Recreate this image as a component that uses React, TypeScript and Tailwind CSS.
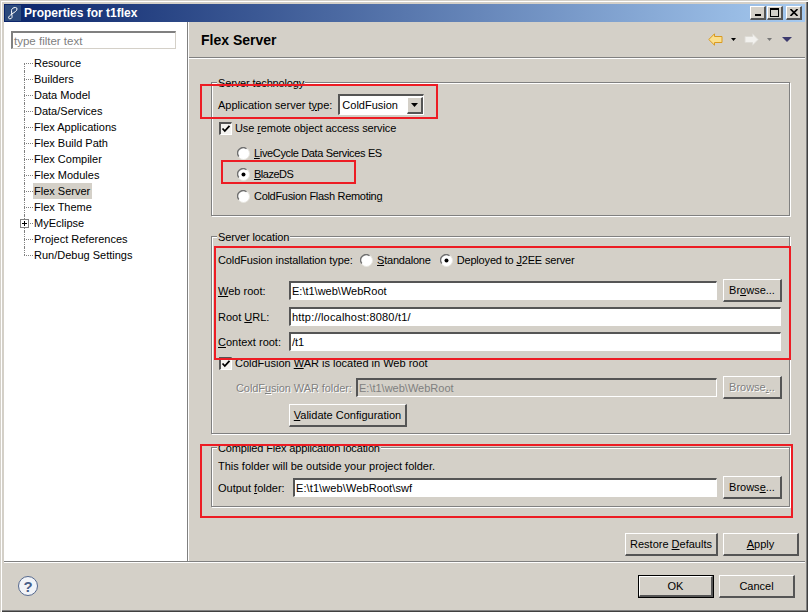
import React from 'react';

const treeItems = [
  'Resource', 'Builders', 'Data Model', 'Data/Services', 'Flex Applications', 'Flex Build Path',
  'Flex Compiler', 'Flex Modules', 'Flex Server', 'Flex Theme', 'MyEclipse', 'Project References',
  'Run/Debug Settings',
];

const raised = 'border-t border-l border-t-white border-l-white border-r-2 border-b-2 border-r-[#555] border-b-[#555]';
const sunken = 'border-t-2 border-l-2 border-t-[#555] border-l-[#555] border-r border-b border-r-white border-b-white';

const Btn: React.FC<{ className?: string; disabled?: boolean; children: React.ReactNode }> = ({ className = '', disabled, children }) => (
  <div className={`flex items-center justify-center shrink-0 bg-[#d4d0c8] ${raised} ${disabled ? 'text-[#808080] [text-shadow:1px_1px_0_#fff]' : 'text-black'} ${className}`}>
    <span>{children}</span>
  </div>
);

const Field: React.FC<{ value?: string; disabled?: boolean; className?: string }> = ({ value, disabled, className = '' }) => (
  <div className={`flex items-center pl-px whitespace-nowrap ${sunken} ${disabled ? 'bg-[#d4d0c8] text-[#808080]' : 'bg-white text-black'} ${className}`}>
    {value}
  </div>
);

const Radio: React.FC<{ on?: boolean }> = ({ on }) => (
  <svg width="13" height="13" viewBox="0 0 13 13" className="shrink-0">
    <circle cx="6.5" cy="6.5" r="6" fill="#fff" stroke="#e8e6e0" />
    <path d="M1.8 9.5A5.5 5.5 0 0 1 9.5 1.8" fill="none" stroke="#707070" strokeWidth="1.4" />
    {on && <circle cx="6.5" cy="6.5" r="2" fill="#000" />}
  </svg>
);

const Check: React.FC = () => (
  <div className={`w-[13px] h-[13px] shrink-0 bg-[#f4f3f0] ${sunken}`}>
    <svg width="10" height="10" viewBox="0 0 10 10" className="block">
      <path d="M1.5 4.5L3.8 7L8.5 1.8" fill="none" stroke="#000" strokeWidth="1.8" />
    </svg>
  </div>
);

const Group: React.FC<{ title: string; className: string; children: React.ReactNode }> = ({ title, className, children }) => (
  <div className={`relative ml-[22px] w-[579px] border border-[#808080] shadow-[inset_1px_1px_0_#fff,1px_1px_0_#fff] ${className}`}>
    <span className="absolute left-[5px] top-[-8px] h-4 leading-4 px-px bg-[#d4d0c8] whitespace-nowrap tracking-[-0.15px]">{title}</span>
    {children}
  </div>
);

const OptionRow: React.FC<{ className: string; on?: boolean; children: React.ReactNode }> = ({ className, on, children }) => (
  <div className={`flex items-center h-4 ml-[25px] gap-1 ${className}`}>
    <Radio on={on} />
    <span>{children}</span>
  </div>
);

const Arrow: React.FC<{ back?: boolean }> = ({ back }) => (
  <svg width="15" height="13" viewBox="0 0 15 13" className={back ? '' : 'ml-[8px]'}>
    {back ? (
      <path d="M0.8 6.5L6.5 0.8V3.5H14V9.5H6.5V12.2Z" fill="#fbdf8c" stroke="#d99a20" />
    ) : (
      <path d="M14.2 6.5L8.5 0.8V3.5H1V9.5H8.5V12.2Z" fill="#f2f1ee" stroke="#dddbd5" />
    )}
  </svg>
);

const Tri: React.FC<{ color: string; className: string; w?: number; h?: number }> = ({ color, className, w = 5, h = 3 }) => (
  <svg width={w} height={h} viewBox={`0 0 ${w} ${h}`} className={className}>
    <path d={`M0 0H${w}L${w / 2} ${h}Z`} fill={color} />
  </svg>
);

export default function App() {
  return (
    <div className="relative w-[808px] h-[612px] overflow-hidden flex flex-col pt-1 pl-1 pr-[3px] pb-[2px] bg-[#d4d0c8] text-[11px] leading-4 text-black font-['Liberation_Sans',Arial,sans-serif] shadow-[inset_1px_1px_0_#d4d0c8,inset_2px_2px_0_#fff,inset_-1px_-1px_0_#404040,inset_-2px_-2px_0_#808080]">
      {/* Title bar */}
      <div className="flex items-center h-[18px] shrink-0 bg-[linear-gradient(to_right,#0a246a,#a6caf0)]">
        <div className="w-4 h-4 ml-px mr-[3px] bg-[#2c4a7c] flex items-center justify-center">
          <svg width="14" height="14" viewBox="0 0 14 14">
            <path d="M9.5 1.5C11.5 1.5 11.5 4 9.5 5.5L4.5 9C2 11 2 12.8 4 12.8C6 12.8 6.5 11 5.8 8.5L5.5 4.5C5.5 2.5 7.5 1.5 9.5 1.5Z" fill="none" stroke="#fff" strokeWidth="1" />
          </svg>
        </div>
        <span className="text-white font-bold text-[12px]">Properties for t1flex</span>
        <div className="ml-auto flex items-center mr-[3px]">
          <div className={`w-4 h-[14px] bg-[#d4d0c8] flex items-end pl-[4px] pb-[2px] ${raised}`}>
            <div className="w-[6px] h-[2px] bg-black" />
          </div>
          <div className={`w-4 h-[14px] ml-[1px] bg-[#d4d0c8] flex items-center justify-center ${raised}`}>
            <div className="w-[9px] h-[9px] border border-t-2 border-black" />
          </div>
          <div className={`w-4 h-[14px] ml-[3px] bg-[#d4d0c8] flex items-center justify-center ${raised}`}>
            <svg width="8" height="7" viewBox="0 0 8 7">
              <path d="M0.5 0L7.5 7M7.5 0L0.5 7" stroke="#000" strokeWidth="1.6" />
            </svg>
          </div>
        </div>
      </div>

      {/* Body */}
      <div className="flex h-[539px] shrink-0">
        {/* Left tree */}
        <div className="w-[183px] shrink-0 bg-white relative">
          <div className="ml-[7px] mt-[9px] w-[165px] h-[18px] flex items-center pl-px text-[#808080] text-[11.5px] bg-white border-t-2 border-l-2 border-t-[#808080] border-l-[#808080] border-r border-b border-r-[#d4d0c8] border-b-[#d4d0c8]">
            type filter text
          </div>
          <div className="mt-[6px] ml-[20px]">
            {treeItems.map((item, i) => (
              <div key={item} className="flex h-4 items-center">
                <div className="relative w-[9px] h-4 shrink-0">
                  <div className={`absolute left-0 border-l border-dotted border-[#808080] ${i === 0 ? 'top-2 h-2' : i === treeItems.length - 1 ? 'top-0 h-2' : 'top-0 h-4'}`} />
                  <div className="absolute left-0 top-2 w-[9px] border-t border-dotted border-[#808080]" />
                  {item === 'MyEclipse' && (
                    <div className="absolute left-[-4px] top-[4px] w-[9px] h-[9px] bg-white border border-[#808080] flex items-center justify-center">
                      <svg width="7" height="7" viewBox="0 0 7 7"><path d="M1 3.5H6M3.5 1V6" stroke="#000" /></svg>
                    </div>
                  )}
                </div>
                <span className={`pl-px pr-[2px] h-4 whitespace-nowrap ${item === 'Flex Server' ? 'bg-[#d4d0c8]' : ''}`}>{item}</span>
              </div>
            ))}
          </div>
        </div>

        <div className="w-px bg-[#808080] shrink-0" />
        <div className="w-px bg-white shrink-0" />

        {/* Right panel */}
        <div className="flex-1 min-w-0 flex flex-col">
          <div className="h-[35px] flex items-center pl-[12px] pr-[13px] shrink-0">
            <span className="font-bold text-[14px]">Flex Server</span>
            <div className="ml-auto flex items-center">
              <Arrow back />
              <Tri color="#000" className="ml-[8px]" />
              <Arrow />
              <Tri color="#777" className="ml-[8px]" />
              <Tri color="#3d3a6e" className="ml-[10px]" w={10} h={5} />
            </div>
          </div>
          <div className="h-px bg-[#808080] shrink-0" />
          <div className="h-px bg-white shrink-0" />

          <Group title="Server technology" className="mt-[23px] h-[134px]">
            <div className="flex items-center h-[21px] mt-[11px] ml-[6px]">
              <span>Application server t<u>y</u>pe:</span>
              <div className={`ml-[6px] w-[86px] h-[21px] flex items-center pl-[2px] bg-white ${sunken}`}>
                ColdFusion
                <div className={`ml-auto w-4 h-[17px] bg-[#d4d0c8] flex items-center justify-center ${raised}`}>
                  <Tri color="#000" className="" w={7} h={4} />
                </div>
              </div>
            </div>
            <div className="flex items-center h-4 mt-[5px] ml-[7px] gap-[3px]">
              <Check />
              <span className="tracking-[-0.1px]">Use <u>r</u>emote object access service</span>
            </div>
            <OptionRow className="mt-[9px] tracking-[-0.35px]"><u>L</u>iveCycle Data Services ES</OptionRow>
            <OptionRow className="mt-[5px] tracking-[-0.5px]" on><u>B</u>lazeDS</OptionRow>
            <OptionRow className="mt-[6px] tracking-[-0.3px]">ColdFusion Flash Remotin<u>g</u></OptionRow>
          </Group>

          <Group title="Server location" className="mt-[20px] h-[198px]">
            <div className="flex items-center h-4 mt-[15px] ml-[6px]">
              <span className="w-[134px] whitespace-nowrap tracking-[-0.1px]">ColdFusion installation type:</span>
              <span className="ml-2"><Radio /></span>
              <span className="ml-1 tracking-[-0.2px]"><u>S</u>tandalone</span>
              <span className="ml-[9px]"><Radio on /></span>
              <span className="ml-1 tracking-[-0.17px]">Deployed to <u>J</u>2EE server</span>
            </div>
            <div className="flex items-center h-[23px] mt-[11px] ml-[6px] mr-[7px]">
              <span className="w-[71px] shrink-0"><u>W</u>eb root:</span>
              <Field value="E:\t1\web\WebRoot" className="flex-1 h-[19px]" />
              <Btn className="w-[59px] h-[23px] ml-[6px]">Br<u>o</u>wse...</Btn>
            </div>
            <div className="flex items-center h-[19px] mt-[5px] ml-[6px] mr-[8px]">
              <span className="w-[71px] shrink-0">Root <u>U</u>RL:</span>
              <Field value="http://localhost:8080/t1/" className="flex-1 h-[19px] tracking-[0.2px]" />
            </div>
            <div className="flex items-center h-[19px] mt-[6px] ml-[6px] mr-[8px]">
              <span className="w-[71px] shrink-0"><u>C</u>ontext root:</span>
              <Field value="/t1" className="flex-1 h-[19px]" />
            </div>
            <div className="flex items-center h-4 mt-[4px] ml-[7px] gap-[3px]">
              <Check />
              <span>ColdFusion <u>W</u>AR is located in Web root</span>
            </div>
            <div className="flex items-center h-[23px] mt-[5px] ml-[24px] mr-[7px]">
              <span className="w-[120px] shrink-0 text-[#808080] [text-shadow:1px_1px_0_#fff] whitespace-nowrap tracking-[-0.08px]">ColdF<u>u</u>sion WAR folder:</span>
              <Field value="E:\t1\web\WebRoot" disabled className="flex-1 h-[19px]" />
              <Btn disabled className="w-[59px] h-[23px] ml-[6px]">Browse<u>.</u>..</Btn>
            </div>
            <Btn className="w-[118px] h-[23px] mt-[5px] ml-[77px]"><u>V</u>alidate Configuration</Btn>
          </Group>

          <Group title="Compiled Flex application location" className="mt-[13px] h-[60px]">
            <div className="h-4 mt-[10px] ml-[6px]">This folder will be outside your project folder.</div>
            <div className="flex items-center h-[23px] mt-[2px] ml-[6px] mr-[7px]">
              <span className="w-[75px] shrink-0">Output <u>f</u>older:</span>
              <Field value="E:\t1\web\WebRoot\swf" className="flex-1 h-[19px] tracking-[0.1px]" />
              <Btn className="w-[59px] h-[23px] ml-[6px]">Brows<u>e</u>...</Btn>
            </div>
          </Group>

          <div className="flex justify-end gap-[5px] mt-[26px] pr-[6px]">
            <Btn className="w-[93px] h-[23px]">Restore <u>D</u>efaults</Btn>
            <Btn className="w-[76px] h-[23px]"><u>A</u>pply</Btn>
          </div>
        </div>
      </div>

      <div className="h-px bg-[#808080] shrink-0" />
      <div className="h-px bg-white shrink-0" />

      {/* Footer */}
      <div className="flex items-center h-[47px] shrink-0 pl-[14px] pr-[10px] pb-px">
        <div className="w-5 h-5 rounded-full bg-[#f2f4f8] border border-[#54688e] flex items-center justify-center font-bold text-[15px] leading-none text-[#4a5f88]">?</div>
        <div className="ml-auto flex gap-[5px]">
          <div className="w-[76px] h-[23px] border border-black">
            <Btn className="w-full h-full">OK</Btn>
          </div>
          <Btn className="w-[76px] h-[23px]">Cancel</Btn>
        </div>
      </div>

      {/* Red annotation boxes */}
      <div className="absolute left-[200px] top-[84px] w-[238px] h-[35px] border-2 border-[#ed1c24]" />
      <div className="absolute left-[221px] top-[160px] w-[135px] h-[24px] border-2 border-[#ed1c24]" />
      <div className="absolute left-[214px] top-[246px] w-[577px] h-[114px] border-2 border-[#ed1c24]" />
      <div className="absolute left-[200px] top-[444px] w-[593px] h-[74px] border-2 border-[#ed1c24]" />
    </div>
  );
}
